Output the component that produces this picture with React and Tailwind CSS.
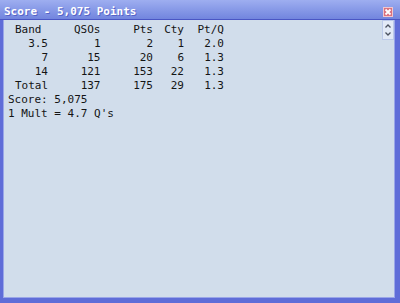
import React from "react";

const rows = [
  { band: "3.5", qsos: "1", pts: "2", cty: "1", ptq: "2.0" },
  { band: "7", qsos: "15", pts: "20", cty: "6", ptq: "1.3" },
  { band: "14", qsos: "121", pts: "153", cty: "22", ptq: "1.3" },
];

const mono = { fontFamily: '"DejaVu Sans Mono", "Liberation Mono", monospace' };

const Row = ({ band, qsos, pts, cty, ptq, left }) => (
  <div className="flex h-[14px]">
    <span className={`w-[40px] ${left ? "pl-[7px] text-left" : "text-right"}`}>{band}</span>
    <span className="w-[52.5px] text-right">{qsos}</span>
    <span className="w-[52.5px] text-right">{pts}</span>
    <span className="w-[31px] text-right">{cty}</span>
    <span className="w-[40px] text-right">{ptq}</span>
  </div>
);

const App = () => {
  return (
    <div className="w-[400px] h-[303px] bg-[#5f6dd8] flex flex-col overflow-hidden" style={mono}>
      <div className="h-[19px] shrink-0 bg-gradient-to-b from-[#9eaef0] to-[#7285de] flex justify-between items-start pl-[4px] pr-[7px]">
        <span className="text-white font-bold text-[11px] leading-[14px] pt-[5px] [text-shadow:1px_1px_0_#5563c8]">
          Score - 5,075 Points
        </span>
        <div className="mt-[7px] w-[10px] h-[10px] bg-[#d9717f] border border-[#f2c6cc] flex items-center justify-center">
          <svg width="8" height="8" viewBox="0 0 8 8">
            <path d="M1.5 1.5 L6.5 6.5 M6.5 1.5 L1.5 6.5" stroke="#fff" strokeWidth="1.8" />
          </svg>
        </div>
      </div>
      <div className="h-[1px] bg-[#4a56c4] shrink-0" />
      <div className="flex-1 flex pl-[3px] pr-[5px] pb-[5px]">
        <div className="flex-1 border-l border-r border-b border-[#9aa6e8] bg-[#d1ddeb] flex">
          <div className="flex-1 pl-[4px] pt-[3px] text-[11px] leading-[14px] text-[#141414]">
            <Row band="Band" qsos="QSOs" pts="Pts" cty="Cty" ptq="Pt/Q" left />
            {rows.map((r) => (
              <Row key={r.band} {...r} />
            ))}
            <Row band="Total" qsos="137" pts="175" cty="29" ptq="1.3" left />
            <div className="h-[14px]">Score: 5,075</div>
            <div className="h-[14px]">1 Mult = 4.7 Q's</div>
          </div>
          <div className="w-[12px] h-[20px] mt-[0px] bg-[#e2eaf7] border border-[#bccaea] flex flex-col items-center justify-center gap-[4px]">
            <svg width="6" height="4" viewBox="0 0 6 4">
              <path d="M0.5 3.5 L3 1 L5.5 3.5" fill="none" stroke="#4b5260" strokeWidth="1.3" />
            </svg>
            <svg width="6" height="4" viewBox="0 0 6 4">
              <path d="M0.5 0.5 L3 3 L5.5 0.5" fill="none" stroke="#4b5260" strokeWidth="1.3" />
            </svg>
          </div>
        </div>
      </div>
    </div>
  );
};

export default App;
